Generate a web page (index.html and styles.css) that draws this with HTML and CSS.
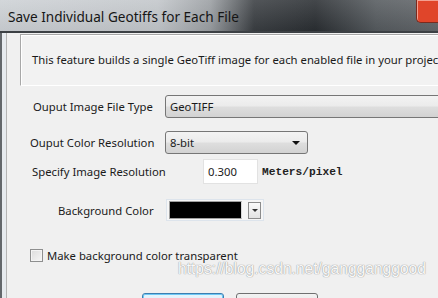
FILE: index.html
```html
<!doctype html>
<html>
<head>
  <link rel="stylesheet" href="styles.css">
</head>
<body>
  <div class="titlebar">
    <span class="title">Save Individual Geotiffs for Each File</span>
    <div class="close"></div>
  </div>
  <div class="frame">
    <div class="client">
      <div class="intro">This feature builds a single GeoTiff image for each enabled file in your project.</div>

      <div class="row r1">
        <span class="label">Ouput Image File Type</span>
        <div class="select wide">GeoTIFF<span class="arrow"></span></div>
      </div>
      <div class="row r2">
        <span class="label">Ouput Color Resolution</span>
        <div class="select narrow">8-bit<span class="arrow"></span></div>
      </div>
      <div class="row r3">
        <span class="label">Specify Image Resolution</span>
        <div class="input">0.300</div>
        <span class="units">Meters/pixel</span>
      </div>
      <div class="row r4">
        <span class="label">Background Color</span>
        <div class="picker">
          <span class="swatch"></span>
          <span class="drop"><span class="arrow small"></span></span>
        </div>
      </div>
      <div class="row check">
        <span class="box"></span>
        <span class="label">Make background color transparent</span>
      </div>
      <div class="buttons">
        <span class="btn ok"></span>
        <span class="btn"></span>
      </div>
    </div>
  </div>
  <div class="watermark">https://blog.csdn.net/gangganggood</div>
</body>
</html>
```

FILE: styles.css
```css
html, body {
  width: 100%;
  height: 100%;
  margin: 0;
  padding: 0;
  overflow: hidden;
  background: #f0f0f0;
  font-family: "Noto Sans", sans-serif;
  font-size: 11.3px;
  color: #1a1a1a;
}

.titlebar {
  position: relative;
  height: 31px;
  border-bottom: 2px solid #3c4044;
  background:
    linear-gradient(rgba(255,255,255,0.12), rgba(0,0,0,0.05)),
    linear-gradient(to right, #cdd1d5 0%, #c2c6ca 36%, #9a9ea2 48%, #3a3e42 58%, #2a2e32 72%, #555a5e 86%, #62666a 100%);
}
.title {
  display: block;
  padding: 7px 0 0 8px;
  font-size: 13.6px;
  color: #151515;
}
/* caption button sits over the right end of the bar */
.close {
  position: absolute;
  top: 0;
  right: 0;
  width: 21px;
  height: 22px;
  border-left: 1px solid #7a2a1e;
  border-bottom: 1px solid #7a2a1e;
  border-bottom-left-radius: 5px;
  background: #e0452a;
  box-shadow: inset 1px 1px 0 #f3a090;
}

.frame {
  display: flex;
  height: 265px;
  overflow: hidden;
  padding-left: 4px;
  border-left: 2px solid #63676b;
  background: #e6eaee;
}
.client {
  flex: 1;
  min-width: 0;
  border-left: 1px solid #b4b4b4;
  background: #f0f0f0;
}

.intro {
  width: 440px;
  height: 50px;
  margin: 1px 0 0 13px;
  padding-left: 11px;
  line-height: 50px;
  white-space: nowrap;
  border-left: 1px solid #a8a8a8;
  border-top: 1px solid #a8a8a8;
  border-bottom: 1px solid #ffffff;
  box-shadow: inset 1px 1px 0 #ffffff;
  background: #f2f2f2;
}

.row {
  display: flex;
  align-items: center;
}
.label {
  flex: none;
}
.r1 { height: 23px; margin-top: 9px; padding-left: 26px; }
.r1 .label { width: 132px; }
.r2 { height: 23px; margin-top: 13px; padding-left: 23px; }
.r2 .label { width: 135px; }
.r3 { height: 25px; margin-top: 5px; padding-left: 25px; }
.r3 .label { width: 171px; }
.r4 { height: 22px; margin-top: 15px; padding-left: 51px; }
.r4 .label { width: 108px; }

.select {
  position: relative;
  flex: none;
  box-sizing: border-box;
  height: 23px;
  padding-left: 4px;
  line-height: 21px;
  border: 1px solid #767676;
  border-radius: 3px;
  background: linear-gradient(#f3f3f3, #ebebeb 48%, #dedede 52%, #d2d2d2);
}
.select.wide { width: 280px; }
.select.narrow { width: 143px; }
.arrow {
  position: absolute;
  right: 7px;
  top: 9px;
  border-left: 4px solid transparent;
  border-right: 4px solid transparent;
  border-top: 4px solid #111;
}
.wide .arrow { right: -6px; }

.input {
  box-sizing: border-box;
  width: 55px;
  height: 25px;
  padding-left: 4px;
  line-height: 23px;
  border: 1px solid #e2e2e2;
  background: #ffffff;
}
.units {
  margin-left: 4px;
  font-family: "Liberation Mono", monospace;
  font-size: 11.2px;
  font-weight: bold;
  color: #222;
}

.picker {
  display: flex;
  gap: 6px;
  align-items: center;
  box-sizing: border-box;
  height: 22px;
  padding: 0 2px;
  border: 1px solid #dde4ec;
  background: #f6f6f6;
}
.swatch {
  width: 71px;
  height: 16px;
  border: 1px solid #a0a0a0;
  border-right-color: #d8d8d8;
  background: #000;
}
.drop {
  position: relative;
  box-sizing: border-box;
  width: 13px;
  height: 17px;
  border: 1px solid #8c8c8c;
  background: linear-gradient(#fafafa, #e2e2e2);
}
.arrow.small {
  right: 2px;
  top: 6px;
  border-left-width: 3px;
  border-right-width: 3px;
  border-top-width: 3px;
  border-top-color: #333;
}

.check {
  height: 14px;
  margin-top: 27px;
  padding-left: 23px;
}
.box {
  box-sizing: border-box;
  width: 13px;
  height: 13px;
  margin-right: 4px;
  border: 1px solid #8e8f8f;
  box-shadow: inset 0 0 0 1px #f4f4f4;
  background: linear-gradient(135deg, #dcdcdc, #f6f6f6);
}

.buttons {
  display: flex;
  gap: 12px;
  margin-top: 31px;
  padding-left: 135px;
}
.btn {
  box-sizing: border-box;
  width: 82px;
  height: 23px;
  border: 1px solid #707070;
  border-radius: 3px;
  background: linear-gradient(#f2f2f2, #dddddd);
}
.btn.ok {
  border-color: #3c7fb1;
  box-shadow: inset 0 0 0 1px #6ec8f5;
  background: linear-gradient(#e8f5fc, #bee6fd);
}

.watermark {
  position: absolute;
  left: 178px;
  top: 260px;
  font-family: "Liberation Sans", sans-serif;
  font-size: 15.6px;
  color: rgba(255,255,255,0.95);
  text-shadow: 0 0 1px #999, 0 0 1px #999;
}
```
